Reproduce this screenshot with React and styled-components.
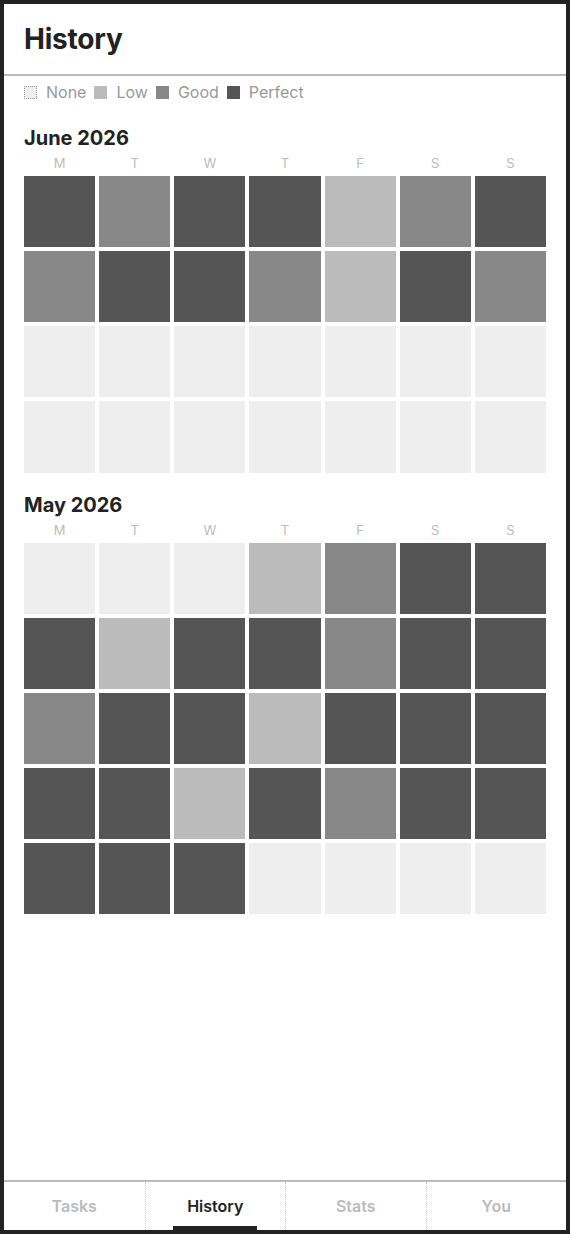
import React from 'react'
import styled, { createGlobalStyle } from 'styled-components'

const GlobalStyle = createGlobalStyle`
  html, body {
    margin: 0;
    padding: 0;
    background: #222;
  }
  body {
    font-family: Inter, "Noto Sans", sans-serif;
    color: #222;
  }
  * {
    box-sizing: border-box;
  }
`

const LEVELS = {
  N: '#eeeeee',
  L: '#bbbbbb',
  G: '#888888',
  P: '#555555',
}

const months = [
  {
    title: 'June 2026',
    rows: ['PGPPLGP', 'GPPGLPG', 'NNNNNNN', 'NNNNNNN'],
  },
  {
    title: 'May 2026',
    rows: ['NNNLGPP', 'PLPPGPP', 'GPPLPPP', 'PPLPGPP', 'PPPNNNN'],
  },
]

const days = ['M', 'T', 'W', 'T', 'F', 'S', 'S']
const tabs = ['Tasks', 'History', 'Stats', 'You']

function History() {
  return (
    <Frame>
      <GlobalStyle />
      <Header>
        <Title>History</Title>
      </Header>
      <Legend>
        <LegendItem>
          <Swatch $level='N' $dotted />
          None
        </LegendItem>
        <LegendItem>
          <Swatch $level='L' />
          Low
        </LegendItem>
        <LegendItem>
          <Swatch $level='G' />
          Good
        </LegendItem>
        <LegendItem>
          <Swatch $level='P' />
          Perfect
        </LegendItem>
      </Legend>
      <Content>
        {months.map((month) => (
          <Month key={month.title}>
            <MonthTitle>{month.title}</MonthTitle>
            <Grid>
              {days.map((d, i) => (
                <DayLabel key={i}>{d}</DayLabel>
              ))}
            </Grid>
            <Grid>
              {month.rows.map((row, r) =>
                row.split('').map((lvl, c) => (
                  <Cell key={`${r}-${c}`} $level={lvl} />
                ))
              )}
            </Grid>
          </Month>
        ))}
      </Content>
      <Nav>
        {tabs.map((t) => (
          <Tab key={t} $active={t === 'History'}>
            {t}
          </Tab>
        ))}
      </Nav>
    </Frame>
  )
}

const Frame = styled.div`
  height: 1234px;
  border: 4px solid #222;
  background: #fff;
  display: flex;
  flex-direction: column;
`

const Header = styled.header`
  height: 72px;
  padding: 0 20px;
  display: flex;
  align-items: center;
  border-bottom: 2px solid #bbb;
`

const Title = styled.h1`
  margin: 0;
  font-size: 28px;
  font-weight: 700;
  letter-spacing: -0.2px;
`

const Legend = styled.div`
  display: flex;
  align-items: center;
  gap: 8px;
  padding: 7px 20px 0;
`

const LegendItem = styled.div`
  display: flex;
  align-items: center;
  gap: 9px;
  font-size: 16px;
  line-height: 18px;
  color: #999;
`

const Swatch = styled.span`
  width: 13px;
  height: 13px;
  background: ${(p) => LEVELS[p.$level]};
  border: ${(p) => (p.$dotted ? '1px dotted #999' : 'none')};
`

const Content = styled.main`
  flex: 1;
  padding: 25px 20px 0;
  display: flex;
  flex-direction: column;
  gap: 20px;
`

const Month = styled.section`
  display: flex;
  flex-direction: column;
`

const MonthTitle = styled.h2`
  margin: 0 0 5px;
  font-size: 20px;
  line-height: 24px;
  font-weight: 700;
`

const Grid = styled.div`
  display: grid;
  grid-template-columns: repeat(7, 1fr);
  gap: 4px;
`

const DayLabel = styled.div`
  text-align: center;
  font-size: 13px;
  line-height: 16px;
  color: #bbb;
  margin-bottom: 5px;
`

const Cell = styled.div`
  aspect-ratio: 1;
  background: ${(p) => LEVELS[p.$level]};
`

const Nav = styled.nav`
  height: 50px;
  border-top: 2px solid #bbb;
  display: grid;
  grid-template-columns: repeat(4, 1fr);
`

const Tab = styled.div`
  position: relative;
  display: flex;
  align-items: center;
  justify-content: center;
  font-size: 16px;
  font-weight: 600;
  color: ${(p) => (p.$active ? '#222' : '#bbb')};
  & + & {
    border-left: 1px dotted #ccc;
  }
  &::after {
    content: '';
    display: ${(p) => (p.$active ? 'block' : 'none')};
    position: absolute;
    bottom: 0;
    left: 50%;
    transform: translateX(-50%);
    width: 84px;
    height: 4px;
    background: #222;
  }
`

export default History
